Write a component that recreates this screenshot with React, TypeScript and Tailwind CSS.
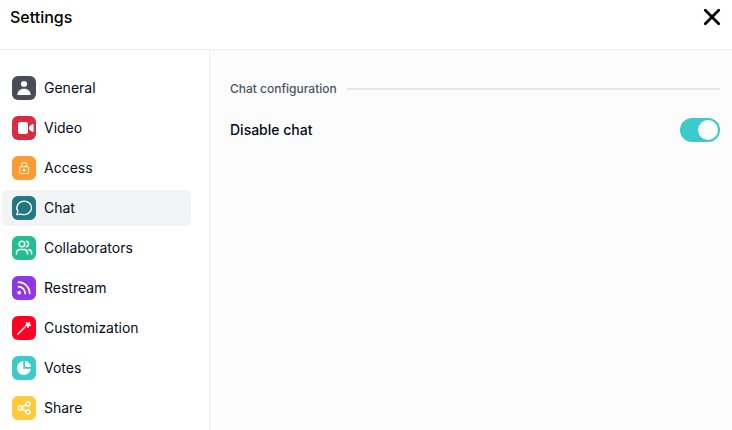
import React, { useState } from 'react';

interface MenuItem {
  name: string;
  color: string;
  icon: React.ReactNode;
}

const menuItems: MenuItem[] = [
  {
    name: 'General',
    color: 'bg-[#474c57]',
    icon: (
      <g fill="#fff">
        <circle cx="12" cy="8" r="3" />
        <path d="M5.300 18.900c.2-3.800 2.700-6.200 6.700-6.200s6.500 2.400 6.700 6.200z" />
      </g>
    ),
  },
  {
    name: 'Video',
    color: 'bg-[#dc2b40]',
    icon: (
      <g fill="#fff">
        <rect x="6" y="6" width="10" height="12" rx="2.500" />
        <path d="M17 10.800l3-2.600c.8-.6 1.600-.2 1.600.8v6c0 1-.8 1.400-1.600.8l-3-2.600z" />
      </g>
    ),
  },
  {
    name: 'Access',
    color: 'bg-[#ff9a30]',
    icon: (
      <g fill="none" stroke="#ffedc4" strokeWidth="1.200">
        <rect x="7.700" y="10.700" width="8.800" height="6.800" rx="1" />
        <path d="M9.700 10.700V8.800a2.400 2.400 0 0 1 4.800 0v1.900" />
        <circle cx="12.100" cy="14.200" r=".7" fill="#fff" stroke="#fff" />
      </g>
    ),
  },
  {
    name: 'Chat',
    color: 'bg-[#237780]',
    icon: (
      <path
        d="M5.900 15.400A7.300 6.700 0 1 1 9.300 18.100L4.700 18.700z"
        fill="none"
        stroke="#fff"
        strokeWidth="1.300"
        strokeLinejoin="round"
      />
    ),
  },
  {
    name: 'Collaborators',
    color: 'bg-[#20bf91]',
    icon: (
      <g fill="none" stroke="#fff" strokeWidth="1.600" strokeLinecap="round">
        <circle cx="10" cy="8" r="2.800" />
        <path d="M4.500 18v-.8c0-2.400 1.500-3.700 3.700-3.700h3.600c2.200 0 3.700 1.300 3.700 3.700v.8" />
        <path d="M14.700 5.300a2.900 2.900 0 0 1 0 5.400M17 13.500c1.700.5 2.600 1.800 2.600 3.700v.8" />
      </g>
    ),
  },
  {
    name: 'Restream',
    color: 'bg-[#9035e8]',
    icon: (
      <g fill="none" stroke="#fff" strokeWidth="1.700" strokeLinecap="round">
        <circle cx="7.200" cy="16.600" r="1.900" fill="#fff" stroke="none" />
        <path d="M6.500 10.700a6.700 6.700 0 0 1 6.700 6.700M6.500 6.200a11.200 11.200 0 0 1 11.200 11.200" />
      </g>
    ),
  },
  {
    name: 'Customization',
    color: 'bg-[#ff0022]',
    icon: (
      <g fill="#fff" stroke="#fff" strokeLinecap="round" strokeLinejoin="round">
        <path d="M5.700 18.200l7.300-7.200" strokeWidth="1.500" />
        <path d="M14.200 6.300l1.900 1 1.600-1.200-.1 2 1.400 1.400-2 .4-.9 1.800-1-1.700-2-.3 1.400-1.500z" strokeWidth=".7" />
      </g>
    ),
  },
  {
    name: 'Votes',
    color: 'bg-[#3bcbcb]',
    icon: (
      <g fill="#fff">
        <path d="M11.300 5.100A7 7 0 1 0 18.900 12.700H11.300z" />
        <path d="M13.200 4.900a6.500 6.500 0 0 1 5.900 6.200h-5.900z" />
      </g>
    ),
  },
  {
    name: 'Share',
    color: 'bg-[#ffcb3b]',
    icon: (
      <g fill="none" stroke="#fff" strokeWidth="1.500">
        <circle cx="8.200" cy="12" r="2" />
        <circle cx="15.900" cy="8" r="2" />
        <circle cx="15.900" cy="16" r="2" />
        <path d="M10 11l4.100-2.100M10 13l4.100 2.100" />
      </g>
    ),
  },
];

const App: React.FC = () => {
  const [active, setActive] = useState('Chat');
  const [chatDisabled, setChatDisabled] = useState(true);

  return (
    <div className="min-h-screen flex flex-col bg-white font-['Inter',sans-serif] text-sm text-[#050b18]">
      <header className="h-[50px] flex items-start justify-between border-b border-[#ececec] pl-[10px] pr-2 pt-[5px]">
        <h1 className="text-base font-medium text-black">Settings</h1>
        <button type="button" aria-label="Close" className="cursor-pointer">
          <svg width="24" height="24" viewBox="0 0 24 24" fill="none" stroke="#000" strokeWidth="2.800" strokeLinecap="round">
            <path d="M5.300 5.300l13.400 13.400M18.700 5.300L5.300 18.700" />
          </svg>
        </button>
      </header>

      <div className="flex flex-1">
        {/* Sidebar */}
        <nav className="w-[210px] shrink-0 flex flex-col gap-1 border-r border-[#ececec] pt-5 pl-[2px] pr-[18px]">
          {menuItems.map((item) => (
            <button
              key={item.name}
              type="button"
              onClick={() => setActive(item.name)}
              className={`h-9 flex items-center gap-2 rounded-md px-[10px] cursor-pointer ${
                active === item.name ? 'bg-[#f2f3f5]' : ''
              }`}
            >
              <span className={`size-6 rounded-md ${item.color}`}>
                <svg width="24" height="24" viewBox="0 0 24 24" aria-hidden="true">
                  {item.icon}
                </svg>
              </span>
              <span>{item.name}</span>
            </button>
          ))}
        </nav>

        {/* Content */}
        <main className="flex-1 bg-[#fcfcfc] pl-5 pr-3 pt-[30px]">
          <div className="flex items-center gap-[10px]">
            <h2 className="text-xs leading-[18px] font-medium text-[#4b5563]">Chat configuration</h2>
            <div className="flex-1 h-[2px] bg-[#e7e7e7]" />
          </div>

          <label className="mt-5 flex items-center justify-between cursor-pointer">
            <span className="font-medium">Disable chat</span>
            <input
              type="checkbox"
              role="switch"
              checked={chatDisabled}
              onChange={(e) => setChatDisabled(e.target.checked)}
              className="appearance-none w-10 h-6 rounded-full bg-gray-300 p-[2px] cursor-pointer checked:bg-[#3bcbcb] before:block before:size-5 before:rounded-full before:bg-white checked:before:ml-4"
            />
          </label>
        </main>
      </div>
    </div>
  );
};

export default App;
